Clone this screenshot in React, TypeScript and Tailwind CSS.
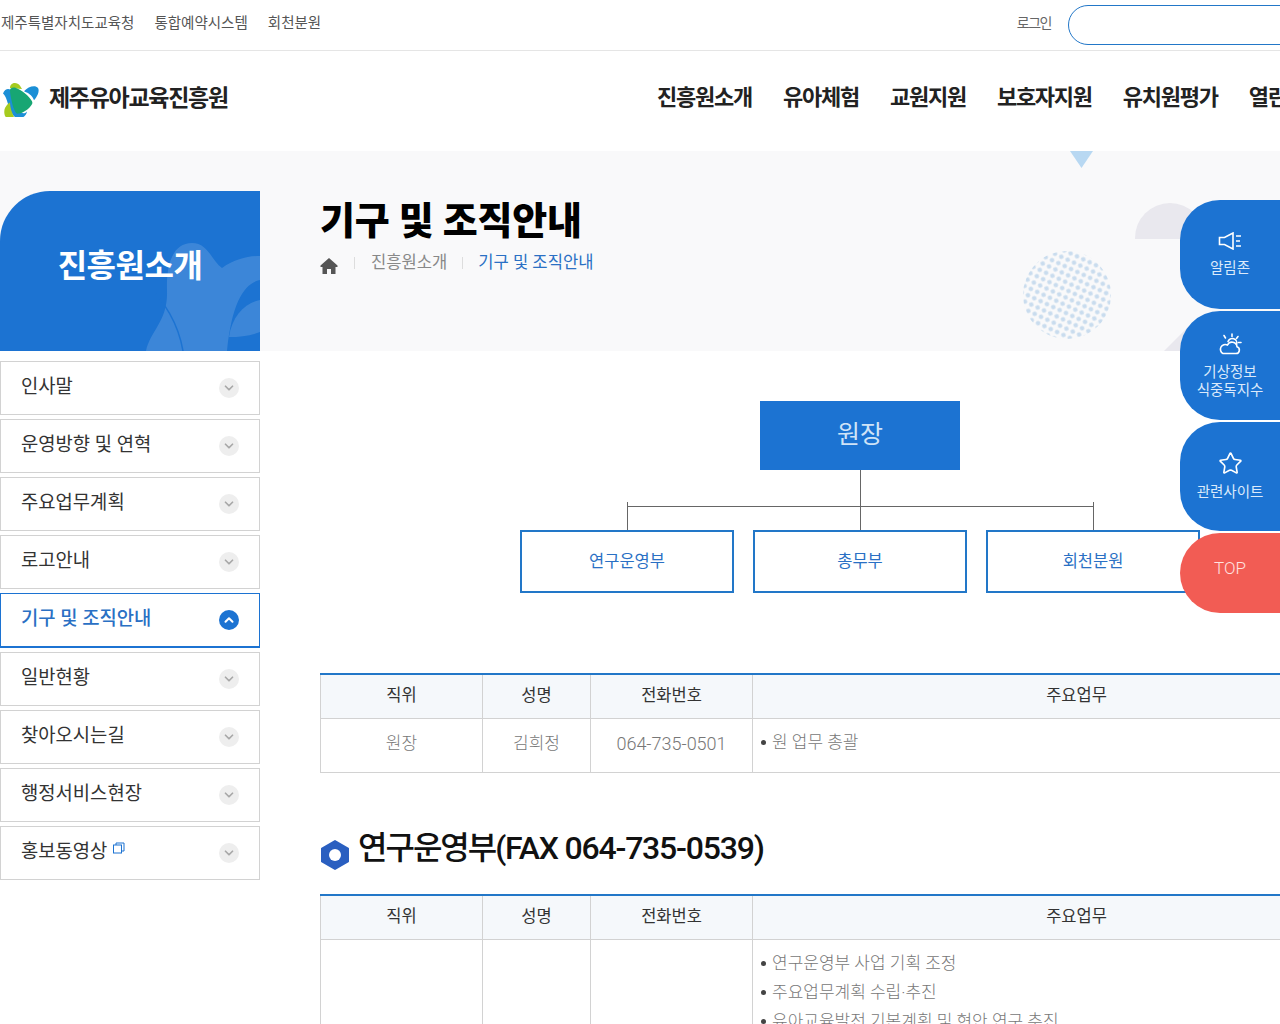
import { ChevronDown, ChevronUp, Star } from "lucide-react";

const FONT = "[font-family:Roboto,'Noto_Sans_CJK_KR',sans-serif]";

const menus = [
  "인사말",
  "운영방향 및 연혁",
  "주요업무계획",
  "로고안내",
  "기구 및 조직안내",
  "일반현황",
  "찾아오시는길",
  "행정서비스현장",
  "홍보동영상",
];

const nav = ["진흥원소개", "유아체험", "교원지원", "보호자지원", "유치원평가", "열린마당"];

function Logo() {
  return (
    <svg width="38" height="38" viewBox="0 -2 38 34" preserveAspectRatio="none" fill="none" className="shrink-0">
      <path d="M8 6C8 1 15 0 18 4l2 3z" fill="#a6cb1f" />
      <path d="M1 11C3 6 8 6 10 9c3 7 5 15 9 19 2 1 4 1 6-1-1 5-7 8-12 5C9 30 6 20 4 15c-1-2-2-3-3-4z" fill="#1b8fd6" />
      <path d="M22 9c4-4 11-6 14-3 2 3-1 8-4 11-1-3-4-6-10-8z" fill="#1b8fd6" />
      <path d="M8 8c0-2 3-3 6-2 6 2 13 7 16 12 1 2 0 3-2 5-3 3-8 6-13 6-2-1-4-6-5-10-1-4-2-8-2-11z" fill="#17a673" />
      <path d="M3 24c1-2 3-4 5-5 0 5 2 9 4 13-3 2-7 2-9-1-1-2-1-5 0-7z" fill="#a6cb1f" />
    </svg>
  );
}

function MenuItem({ label, active }: { label: string; active: boolean }) {
  return (
    <li
      className={
        active
          ? "flex h-[55px] items-center justify-between border border-[#1c73d2] border-b-2 pl-5 pr-5 text-[#2a70c4] font-medium"
          : "flex h-[54px] items-center justify-between border border-[#d2d2d2] pl-5 pr-5 text-[#333]"
      }
    >
      <span className="flex -translate-y-px items-start text-[18.8px]">
        {label}
        {label === "홍보동영상" && (
          <svg width="12" height="12" viewBox="0 0 12 12" fill="none" className="ml-1.5 mt-1" stroke="#1c73d2">
            <rect x="0.5" y="3" width="8" height="8" />
            <path d="M3 3V1h8v8H8.500" />
          </svg>
        )}
      </span>
      {active ? (
        <span className="flex h-5 w-5 items-center justify-center rounded-full bg-[#1c73d2]">
          <ChevronUp size={14} strokeWidth={3.5} color="#fff" />
        </span>
      ) : (
        <span className="flex h-5 w-5 items-center justify-center rounded-full bg-[#eeeeee]">
          <ChevronDown size={14} strokeWidth={3} color="#a8a8a8" />
        </span>
      )}
    </li>
  );
}

function TableHead() {
  return (
    <div className="grid h-[46px] grid-cols-[162px_108px_162px_648px] border-t-2 border-b border-t-[#2277c8] border-b-[#d2d2d2] bg-[#f5f8fb] text-[16.5px] text-[#333]">
      {["직위", "성명", "전화번호", "주요업무"].map((h) => (
        <div key={h} className="flex items-center justify-center border-l border-[#d2d2d2]">
          {h}
        </div>
      ))}
    </div>
  );
}

function Duty({ text }: { text: string }) {
  return (
    <p className="flex items-center gap-1.5 text-[17px] leading-[29px] font-light text-[#777]">
      <span className="h-[5px] w-[5px] rounded-full bg-[#444]" />
      {text}
    </p>
  );
}

export default function App() {
  return (
    <div className={"relative h-[1024px] w-[1280px] overflow-hidden bg-white " + FONT}>
      <div className="flex h-[51px] items-center border-b border-[#e5e5e5] pl-px">
        <div className="flex gap-5 pb-[2px] text-[14.5px] text-[#555]">
          <span>제주특별자치도교육청</span>
          <span>통합예약시스템</span>
          <span>회천분원</span>
        </div>
        <div className="ml-auto mr-[-48px] flex items-center gap-[17px]">
          <span className="pb-1 text-sm tracking-[-1.5px] text-[#666]">로그인</span>
          <div className="h-10 w-[260px] shrink-0 rounded-l-[20px] border border-[#2277c8]" />
        </div>
      </div>

      <header className="flex h-[100px] items-center whitespace-nowrap pb-1.5 pl-[2px]">
        <div className="flex w-[655px] shrink-0 items-center gap-[9px]">
          <Logo />
          <span className="translate-y-px text-[23px] font-bold tracking-[-1.3px] text-[#222]">제주유아교육진흥원</span>
        </div>
        <nav className="flex shrink-0 -translate-y-px gap-[31px] text-[22px] font-bold tracking-[-1.25px] text-[#222]">
          {nav.map((n) => (
            <span key={n}>{n}</span>
          ))}
        </nav>
      </header>

      <div className="relative flex bg-[linear-gradient(#f9f9fa_200px,#ffffff_200px)] pt-10">
        {/* banner shapes */}
        <svg className="absolute left-[1070px] top-0" width="24" height="18" viewBox="0 0 24 18">
          <path d="M0 0h23L11.500 17z" fill="#b8d8f2" />
        </svg>
        <div className="absolute left-[1135px] top-[52px] h-[36px] w-[70px] rounded-t-full bg-[#e9e8ee]" />
        <svg className="absolute left-[1160px] top-[176px]" width="30" height="24" viewBox="0 0 30 24">
          <path d="M4 24L28 0v24z" fill="#e9e8ee" />
        </svg>
        <svg className="absolute left-[1022px] top-[99px]" width="90" height="90" viewBox="0 0 90 90">
          <defs>
            <pattern id="dots" width="7" height="7" patternUnits="userSpaceOnUse" patternTransform="rotate(25)">
              <circle cx="3.500" cy="3.500" r="2.300" fill="#c9dcee" />
            </pattern>
          </defs>
          <circle cx="45" cy="45" r="44" fill="url(#dots)" />
        </svg>

        <aside className="relative w-[260px] shrink-0">
          <div className="relative flex h-40 items-center justify-center overflow-hidden rounded-tl-[50px] bg-[#1c73d2]">
            <svg className="absolute inset-0" width="260" height="160" viewBox="0 0 260 160">
              <path
                d="M146 160C150 140 168 130 167 100 166 75 172 52 192 52 208 52 212 70 222 77 235 68 248 65 260 65V89C245 92 232 110 227 160z"
                fill="#ffffff"
                fillOpacity="0.14"
              />
              <path d="M260 109C245 112 232 125 229 146 240 146 250 145 260 141z" fill="#ffffff" fillOpacity="0.14" />
              <path d="M142 88C160 105 178 130 183 160" fill="none" stroke="#1c73d2" strokeWidth="1.500" />
            </svg>
            <span className="relative -translate-y-1 pb-[2px] text-[32px] font-bold tracking-[-0.5px] text-white">진흥원소개</span>
          </div>
          <ul className="mt-[10px] flex flex-col gap-1">
            {menus.map((m) => (
              <MenuItem key={m} label={m} active={m === "기구 및 조직안내"} />
            ))}
          </ul>
        </aside>

        <main className="relative ml-[60px] w-[1080px] shrink-0">
          <h1 className="pt-[2px] text-[38px] leading-[56px] font-black tracking-[-0.2px] text-black">기구 및 조직안내</h1>
          <div className="mt-[2px] flex h-6 items-center text-[16.6px] text-[#888]">
            <svg width="18" height="18" viewBox="0 0 18 18" className="translate-y-[3px]">
              <path d="M9 1L0.500 8.500V10H2.500v7H7v-5h4v5h4.500v-7H17.500V8.500z" fill="#555" />
            </svg>
            <span className="mx-4 h-3 w-px bg-[#ddd]" />
            <span>진흥원소개</span>
            <span className="mx-[15px] h-3 w-px bg-[#ddd]" />
            <span className="text-[#2a70c4]">기구 및 조직안내</span>
          </div>

          <div className="mt-[126px] flex flex-col items-center">
            <div className="flex h-[69px] w-[200px] items-center justify-center bg-[#1c73d2] pb-[2px] text-[25px] text-[#cfe3f7]">원장</div>
            <div className="h-9 w-px bg-[#666]" />
            <div className="h-px w-[467px] bg-[#666]" />
            <div className="flex gap-[19px]">
              {["연구운영부", "총무부", "회천분원"].map((d, i) => (
                <div key={d} className="flex flex-col items-center">
                  <div className={i === 1 ? "h-[23px] w-px bg-[#666]" : "-mt-[5px] h-7 w-px bg-[#666]"} />
                  <div className="flex h-[63px] w-[214px] items-center justify-center border-2 border-[#2277c8] pt-px text-[16.5px] text-[#2a70c4]">
                    {d}
                  </div>
                </div>
              ))}
            </div>
          </div>

          <div className="mt-20">
            <TableHead />
            <div className="grid h-[54px] grid-cols-[162px_108px_162px_648px] border-b border-[#d2d2d2] text-[17px] font-light text-[#777]">
              <div className="flex items-center justify-center border-l border-[#d2d2d2] pb-1">원장</div>
              <div className="flex items-center justify-center border-l border-[#d2d2d2] pb-1">김희정</div>
              <div className="flex items-center justify-center border-l border-[#d2d2d2] pb-1 text-[18px]">064-735-0501</div>
              <div className="border-l border-[#d2d2d2] pl-2 pt-[9px]">
                <Duty text="원 업무 총괄" />
              </div>
            </div>
          </div>

          <h2 className="mt-[49px] flex h-14 items-center gap-2 text-[32px] font-medium text-[#111]">
            <svg width="30" height="32" viewBox="0 0 30 32" className="mt-[10px] shrink-0">
              <path d="M15 2l13 7.500v13L15 30 2 22.500v-13z" fill="#2a5fc0" stroke="#2a5fc0" strokeWidth="2" strokeLinejoin="round" />
              <circle cx="15" cy="16" r="6" fill="#fff" />
            </svg>
            <span className="-translate-y-[2px] whitespace-nowrap">
              <span className="tracking-[-2px]">연구운영부</span>
              <span className="tracking-[-1.2px]">(FAX 064-735-0539)</span>
            </span>
          </h2>

          <div className="mt-4">
            <TableHead />
            <div className="grid h-[200px] grid-cols-[162px_108px_162px_648px] text-[17px]">
              <div className="border-l border-[#d2d2d2]" />
              <div className="border-l border-[#d2d2d2]" />
              <div className="border-l border-[#d2d2d2]" />
              <div className="border-l border-[#d2d2d2] pl-2 pt-[9px]">
                <Duty text="연구운영부 사업 기획 조정" />
                <Duty text="주요업무계획 수립·추진" />
                <Duty text="유아교육발전 기본계획 및 현안 연구 추진" />
              </div>
            </div>
          </div>
        </main>
      </div>

      {/* floating quick menu */}
      <div className="absolute left-[1180px] top-[200px] flex w-[100px] flex-col gap-[2px] text-white">
        <div className="flex h-[109px] flex-col items-center justify-start rounded-l-[40px] bg-[#1c73d2] pt-[32px] text-[14.5px] text-[#dbeafb]">
          <svg width="24" height="18" viewBox="0 0 24 18" fill="none" stroke="#fff" strokeWidth="1.600">
            <path d="M1.500 5.500h5L15 1v16l-8.500-4.500h-5z" />
            <path d="M18 4h5M18 9h4M18 14h5" />
          </svg>
          <span className="mt-[8px]">알림존</span>
        </div>
        <div className="flex h-[109px] flex-col items-center rounded-l-[40px] bg-[#1c73d2] pt-[21px] text-[14.5px] leading-[18px] text-[#dbeafb]">
          <svg width="24" height="24" viewBox="0 0 24 24" fill="none" stroke="#fff" strokeWidth="1.600" strokeLinecap="round">
            <path d="M5 21.500h13a3.500 3.500 0 0 0 1-6.800 5 5 0 0 0-9.500-1.700A4.300 4.300 0 0 0 5 21.500z" />
            <path d="M10 9.500a4.500 4.500 0 0 1 8.500 3M14 2v2.500M20 4.500l-1.500 2M23 10.500h-2.500M6 3.500l1.500 2.500" />
          </svg>
          <span className="mt-[8px]">기상정보</span>
          <span>식중독지수</span>
        </div>
        <div className="flex h-[109px] flex-col items-center rounded-l-[40px] bg-[#1c73d2] pt-[29px] text-[14.5px] text-[#dbeafb]">
          <Star size={25} strokeWidth={1.6} color="#fff" />
          <span className="mt-[6px]">관련사이트</span>
        </div>
        <div className="flex h-20 items-center justify-center rounded-l-[40px] bg-[#f25c54] pb-2 text-[17px] font-light text-[#ffe3e0]">TOP</div>
      </div>
    </div>
  );
}
